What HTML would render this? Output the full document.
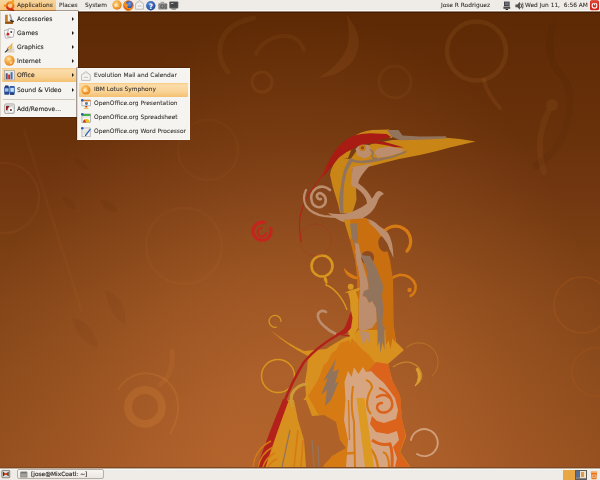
<!DOCTYPE html>
<html><head><meta charset="utf-8"><title>Desktop</title>
<style>
html,body{margin:0;padding:0;}
body{width:600px;height:480px;overflow:hidden;position:relative;background:#7c3e15;font-family:"DejaVu Sans","Liberation Sans",sans-serif;font-size:5.86px;color:#2a2622;}
#wall{position:absolute;left:0;top:0;width:600px;height:480px;
background:
 radial-gradient(ellipse 330px 470px at 297px 485px,rgba(255,150,80,.31) 0,rgba(255,150,80,.29) 25%,rgba(255,150,80,.20) 50%,rgba(255,150,80,.10) 72%,rgba(255,150,80,0) 100%),
 linear-gradient(180deg,#5b2904 0,#5e2a05 25px,#6a320b 143px,#703610 183px,#7a3e13 243px,#844518 303px,#8b4a1b 373px,#934e1e 458px,#944f1e 480px);}
#art{position:absolute;left:0;top:0;width:600px;height:480px;}
#top{position:absolute;left:0;top:0;width:600px;height:13px;background:linear-gradient(#efebe7 0,#efebe7 9.6px,#fcfbfa 10px,#fcfbfa 10.8px,#9b8270 11px,#9b8270 12px,#431c02 12px,#431c02 13px);}
#top .t{-webkit-text-stroke:.08px #2a2622;color:#35312d;will-change:transform;position:absolute;top:0;height:11px;line-height:10.5px;white-space:nowrap;}
#appsel{position:absolute;left:0;top:0;width:56px;height:11px;background:linear-gradient(#f8d59c,#f3c27a);}
#bot{position:absolute;left:0;top:467px;width:600px;height:13px;background:linear-gradient(#7c4a24 0,#7c4a24 1px,#c4ad98 1px,#c4ad98 2px,#f6faf6 2px,#f6faf6 3px,#e9ecea 3px,#e9ecea 4px,#efebe7 4px);}
.menu{position:absolute;background:#f6f4f1;border:1px solid #f9f8f6;border-left-color:#ddd7cd;outline:0;box-shadow:0 0 0 .5px rgba(60,28,6,.85);box-sizing:border-box;}
.mi{position:absolute;left:1px;right:1px;height:14px;line-height:13.5px;white-space:nowrap;}
.mi span{position:absolute;left:15px;top:0;will-change:transform;-webkit-text-stroke:.1px #2a2622;}
#m1 .mi{font-size:6.05px}
#m2 .mi{font-size:5.92px}
#m2 .ic{width:9.8px;height:9.8px}
#m2 .mi span{-webkit-text-stroke:.06px #2a2622;color:#33302c}
.mi.sel{background:linear-gradient(#f5ca7e 0,#fbdcaa 14%,#f9d397 60%,#f3c071 100%);border-radius:1px;}
.arr{position:absolute;right:1.6px;top:5px;width:0;height:0;border-left:2.6px solid #1c1c1c;border-top:2.1px solid transparent;border-bottom:2.1px solid transparent;}
.ic{position:absolute;left:2px;top:2px;width:11px;height:11px;}
</style></head><body>
<div id="wall"></div>
<svg id="art" viewBox="0 0 600 480">
<g id="bgswirls" fill="none" style="filter:blur(.7px)">
<circle cx="476.5" cy="51" r="29.5" stroke="rgba(255,170,90,.085)" stroke-width="4.5"/>
<path d="M484,80 q3,14 16,28" stroke="rgba(255,170,90,.08)" stroke-width="4" stroke-linecap="round"/>
<path d="M552,26 q-8,30 10,50 q14,18 4,50 q-6,24 -30,40" stroke="rgba(40,10,0,.06)" stroke-width="7" stroke-linecap="round"/>
<circle cx="552" cy="105" r="6" fill="rgba(255,170,90,.07)"/>
<path d="M548,112 q-14,30 -4,60" stroke="rgba(255,170,90,.06)" stroke-width="6" stroke-linecap="round"/>
<path d="M346,14 Q368,40 352,62 Q340,76 318,78 Q342,64 348,44 Q350,28 346,14 Z" fill="rgba(255,170,90,.08)"/>
<path d="M254,18 Q224,24 220,46 Q218,60 228,72" stroke="rgba(255,170,90,.06)" stroke-width="5" stroke-linecap="round"/>
<path d="M256,54 Q262,40 280,36 Q298,34 304,50" stroke="rgba(255,170,90,.06)" stroke-width="4" stroke-linecap="round"/>
<circle cx="262" cy="82" r="10" stroke="rgba(255,170,90,.07)" stroke-width="3"/>
<circle cx="395" cy="82" r="16" stroke="rgba(255,170,90,.05)" stroke-width="3"/>
<circle cx="145" cy="407" r="17" stroke="rgba(255,170,70,.15)" stroke-width="8"/>
<path d="M118,390 a32,32 0 0,1 58,4 q6,20 -6,40" stroke="rgba(255,170,70,.12)" stroke-width="2"/>
<path d="M160,385 q14,-12 12,-34" stroke="rgba(255,170,70,.08)" stroke-width="5" stroke-linecap="round"/>
<circle cx="4" cy="198" r="35" stroke="rgba(255,160,80,.05)" stroke-width="2.5"/>
<circle cx="208" cy="150" r="30" stroke="rgba(255,160,80,.04)" stroke-width="2.5"/>
<circle cx="184" cy="246" r="38" stroke="rgba(255,160,80,.035)" stroke-width="3"/>
<path d="M24,130 L82,312" stroke="rgba(255,160,80,.04)" stroke-width="3"/>
<path d="M62,196 q12,2 14,14 q-12,-2 -14,-14 Z M100,200 q14,0 18,12 q-14,0 -18,-12 Z M74,158 q12,2 14,12 q-12,-2 -14,-12 Z" fill="rgba(50,15,0,.06)"/>
<path d="M105,290 q22,8 20,34 q-16,-8 -20,-34 Z" fill="rgba(50,15,0,.05)"/>
<path d="M72,318 q22,4 26,30 q-20,-6 -26,-30 Z" fill="rgba(50,15,0,.05)"/>
<circle cx="582" cy="305" r="28" stroke="rgba(220,110,30,.16)" stroke-width="1.6"/>
<circle cx="596" cy="372" r="24" stroke="rgba(220,110,30,.13)" stroke-width="1.6"/>
</g>
<g id="heron">
<!-- rings / swirls behind -->
<circle cx="322" cy="266" r="10.5" fill="none" stroke="#d8951f" stroke-width="2.6"/>
<path d="M325,277 q3,4 1,8 q6,2 12,9 q6,7 9,16" fill="none" stroke="#d8951f" stroke-width="1.4"/>
<path d="M324,276 q4,2 3,8 q-4,-2 -3,-8 Z" fill="#d8951f"/>
<path d="M382,235 A15,15 0 1,1 407,251" fill="none" stroke="#d67a14" stroke-width="3.3" stroke-linecap="round"/>
<path d="M384,290 Q388,277 400,274.8 Q412,275 415.5,285 Q416.5,293 410.5,296" fill="none" stroke="#d67a14" stroke-width="2.6" stroke-linecap="round"/>
<circle cx="409.5" cy="290" r="2.2" fill="#d67a14"/>
<path d="M344,268 q8,10 24,10 q-12,4 -20,-2 q-4,-4 -4,-8 Z" fill="#d67a14"/>
<circle cx="278" cy="376" r="16.5" fill="none" stroke="#d8951f" stroke-width="1.5"/>
<path d="M281,322 a6,6 0 1,0 -4,5" fill="none" stroke="#d8951f" stroke-width="1.2"/>
<path d="M411,440 a13.5,13.5 0 1,1 6,14" fill="none" stroke="#d0a07c" stroke-width="1.9" stroke-linecap="round"/>
<path d="M393,367 Q408,357 419,368 Q426,378 415,386" fill="none" stroke="rgba(220,160,50,.6)" stroke-width="1.2"/><path d="M418,368 Q425,378 415,386 Q421,377 416,369 Z" fill="#dca030" stroke="#dca030" stroke-width=".8"/>
<path d="M406,348 a18,18 0 1,1 26,28" fill="none" stroke="rgba(215,150,50,.35)" stroke-width="1.1"/>
<!-- head crown -->
<path fill="#c98516" d="M336,158 Q341,146 350,139 Q360,131 372,130 L389,129.5 L394,133 L392,138 L380,136 Q360,138 352,148 L348,158 Z"/>
<!-- beak + cheek -->
<path fill="#c98516" d="M350,160 L357,150 L372,144 L392,140 L405,139.5 L420,138.5 L444,137.6 L460,139 L475.5,141.5 L450,147.5 L435,151.5 L420,155 L399,159 L385,162.5 L372,166 L360,168 L352,168 Z"/>
<!-- neck upper -->
<path fill="#c98516" d="M337,157 L331,170 L330,175 L332.5,186 L335.5,196 L338,204 L340,213 L352,213 L354,208 L356.5,200 L356,187 L352,180 L352,170 L356,160 Z"/>
<path fill="#92735c" d="M350,158 Q344.5,166 342.5,176 Q340,190 339,200 L340.5,213 L343.5,213 Q342.5,196 344.5,182 Q346.5,168 354,160 Z"/>
<!-- tan throat -->
<path fill="#bc8e6e" d="M352.5,167 L372,163.5 Q363,172 359,180 L357,188 L351,184 Z"/>
<path d="M354,184 Q363,190 369,198 Q374,207 364,214" fill="none" stroke="#bc8e6e" stroke-width="3"/>
<!-- tan eye patch -->
<path fill="#bc8e6e" d="M355.5,149 L357.5,155.8 L365,158.5 L370,156 L371.7,150 L368.5,145 L360,144 Z"/>
<path fill="#bc8e6e" d="M377,148.5 L390,146.5 L403.5,149.2 L401.7,152.6 L390,156 L378.3,157.7 L374,153 Z"/>
<path d="M370,149.5 q5,3 2,6 q-1,3 5,3" fill="none" stroke="#92735c" stroke-width="1.6"/>
<path fill="#92735c" d="M352,159 Q360,162 370,159.5 Q380,158 392,156 L407,150.5 L406,152.8 L392,158 Q380,161 370,162.5 Q358,164.5 351,161.5 Z"/>
<path fill="#92735c" d="M387,130 L398.5,130 L402.5,135.5 L420,136.6 L446,136.2 L446,138.4 L420,139.8 L400,140.3 L391.5,136.5 Z"/>
<!-- red crest -->
<path fill="#a81c14" d="M321.5,177 Q330,156 338.3,146.7 Q345,139.5 353.3,135.8 Q361,133.5 370,133.3 L386.7,134 L391,137 L385,139 L375,140.5 L383,141.5 Q392,144 404,147.5 Q394,147.5 385,145 L372,143 Q364,144 358.3,146 L352,149.5 L346.7,152 L339,157.5 Q333,165 325.5,174 L321.5,177 Z"/>
<path d="M328,167 Q318,181 309,194 Q303,204 300.5,214 Q298,228 301.5,242" fill="none" stroke="#b0241a" stroke-width="1.2"/>
<circle cx="315.5" cy="240" r="16" fill="none" stroke="rgba(176,36,26,.25)" stroke-width="1"/>
<!-- red spiral -->
<path d="M264,222.5 a9,9 0 1,0 6.5,6 " fill="none" stroke="#c3261c" stroke-width="3.4" stroke-linecap="round"/>
<path d="M266,233 a4.2,4.2 0 1,1 -4,-5" fill="none" stroke="#c3261c" stroke-width="2" stroke-linecap="round"/>
<!-- eye -->
<circle cx="362.5" cy="147.8" r="3.3" fill="#c47818"/>
<circle cx="362.5" cy="147.8" r="1.5" fill="#8a4a10"/>
<!-- tan spiral left -->
<path d="M321,199 a3,3 0 1,1 1,-5 a7,7 0 1,1 -10,8 a11,11 0 0,1 18,-12" fill="none" stroke="#bc8e6e" stroke-width="2.6" stroke-linecap="round"/>
<path d="M306,190 q-4,8 0,16 q6,8 18,10 q8,1 16,1" fill="none" stroke="#bc8e6e" stroke-width="2.2" stroke-linecap="round"/>
<!-- tan swoosh across neck -->
<path fill="#bc8e6e" d="M328,213 Q345,216 356,210 Q368,205 374,196 Q378,187 384,194 Q379,196 377,203 Q373,213 363,218 Q373,219 379,226 Q386,236 392,252 Q383,241 375,231 Q367,223 352,223.5 Q340,223 328,213 Z"/>
<path fill="#bc8e6e" d="M352,181 L358,183 Q368,190 372,199 Q376,208 366,214 L362,213 Q369,206 366,199 Q362,190 352,186 Z"/>
<!-- neck lower -->
<path fill="#c96f10" d="M344,220 L366,218 L374,226 L384,240 L390,260 L393,280 L394,336 L358,336 L357,276 L355,260 L350,240 Z"/>
<path fill="#c98516" d="M344,220 L350,220 L352,236 L350,240 Z"/>
<ellipse cx="384" cy="243.8" rx="5.6" ry="8" fill="#8d4a1c" transform="rotate(-12 384 243.8)"/>
<circle cx="367.5" cy="257.5" r="6.6" fill="#8f4b1d"/>
<path fill="#92735c" d="M350,224 L356.7,223 L358,238 L356.5,241 L358,250 L361,253 L363.5,255.5 L370,256 L375.8,266.7 L379,275 L382.5,283.3 L383,289 L382,295 L383.3,308 L382.5,321 L383,338 L377,338 L376.7,321 L376,308 L372,301 L369,303 L366,297 L362.5,296 L364,291 L368.5,289 L368.3,283.3 L368,275 L365.8,266.7 L362.5,259 L359.5,256 L355.5,250 L353.5,241 L352,238.7 Z"/>
<path fill="#bc8e6e" d="M354.7,242.7 L358.7,244 L361.3,256 L360,266.7 L356.7,265.3 L356,252 Z"/>
<path fill="#bc8e6e" d="M355,250 L359,250 L362,262 L366,275 L368,283 L368.5,289 L364,291 L362.5,296 L366,297 L369,303 L372,301 L376,308 L376.7,321 L372,328 L366,330 L362,336 L358.7,328 L358.7,305 L360,290 L360,281 L358,268 Z"/>
<path fill="#bc8e6e" d="M368,222 Q381,225 388,233 Q393,241 393.5,258 Q390,250 387,243 Q379,231 368,222 Z"/>
<!-- yellow figure -->
<circle cx="350.7" cy="286.7" r="3" fill="#d8951f"/>
<path fill="#d8951f" d="M344.7,292.5 L350,290.5 L360,287.5 L359.5,290 L353,293.5 Z"/>
<path fill="#d8951f" d="M348,292 L356,291 L358.5,300 L358,328 L354,336 L349,336 L351,318 L350,300 Z"/>
<!-- tan J left -->
<path d="M326,312 q-5,-3 -8,2 q-1,6 6,12 q5,5 12,8" fill="none" stroke="#bc8e6e" stroke-width="2.6" stroke-linecap="round"/>
<!-- body -->
<path fill="#d8901e" d="M270,330 Q290,345 304,351 L326,349 L334,344 L344,338 L354,335 L358,330 L394,330 L396,342 L404,350 L388,364 L392,380 L400,396 L402,420 L406,436 L400,452 L410,467 L262,467 L268,446 L276,424 L288,400 L294,400 L298,408 L306,396 L305,382 L307,370 L308,356 Q288,346 270,330 Z"/>
<path fill="#d67a14" d="M318,380 L324,365 L328,361 L331,354 L336,350 L340,343 L347,341 L353,338.5 L358,345 L364,351 L369,355 L375,363 L388,364 L392,380 L400,396 L402,420 L406,436 L400,452 L410,467 L322,467 L332,456 L346,448 L340,440 L334,424 L318,414 L308,396 Z"/>
<path fill="#db631c" d="M382,364 L388,364 L392,380 L400,396 L402,420 L405,436 L399,452 L409,467 L372,467 L376,440 L380,420 L376,396 L374,380 Z"/>
<path fill="#ae622a" d="M294,400 L306,400 L312,416 L324,415 L336,422 L340,440 L346,448 L332,456 L324,467 L306,467 L304,440 L298,420 Z"/>
<path d="M308,384 q-11,0 -16,10 q-2,7 1,13" fill="none" stroke="#cf9a35" stroke-width="3.2"/>
<path d="M298,430 l-4,37 M303,440 l-2,27" stroke="#d67a14" stroke-width="1.6" fill="none"/>
<path d="M290,430 l-8,37" stroke="#92735c" stroke-width="1.2" fill="none"/>
<!-- neck strokes into body -->
<path fill="#92735c" d="M377.5,326 L384.5,326 L384.5,350 L382.5,342 L380.5,353 L379.5,341 L377.5,347 Z"/>
<path fill="#c96f10" d="M385,326 L394,326 L395.5,343 L392.5,338 L390.5,349 L388.5,340 L386,345 Z"/>
<path fill="#bc8e6e" d="M360,330 L370,333 L369,343 L366,338 L363.5,346 L361,338 Z"/>
<path fill="#d8951f" d="M348,330 L355,330 L355,342 L352,337 L350,344 Z"/>
<!-- grey strokes body -->
<path fill="#92735c" d="M336,358 L333,372 L339,369 L335,384 L339,381 L331,400 L325,406 L327,390 L321,395 L328,378 L323,381 L332,366 Z"/>
<path d="M312,440 l2,27 M318,446 l1,21" stroke="#92735c" stroke-width="1.4" fill="none"/>
<!-- tan swirl body -->
<path fill="#db631c" d="M364,376 L376,362 L388,364 L392,380 L400,396 L402,420 L405,436 L399,452 L409,467 L360,467 L360,420 Z"/>
<path fill="#d8a581" d="M344.5,382 L348,371 L351.5,377 L354,367.5 L358.5,374 L363,367 L366,372 L371,371 L377,377 L384,383 L390,391 L395,398 L398,410 L396,419 L390,421 L384,423 L377,421 L372,416 L370,424 L376,432 L388,434 L397,431 L399,440 L393,447 L397,458 L395,467 L346,467 L348,440 L344,420 L345.5,400 Z"/>
<path d="M366,380 q6,2 6,8 q-4,6 -5,14 q0,8 4,12" fill="none" stroke="#d67a14" stroke-width="2.2"/>
<path d="M377,397 q8,-5 14,2 q4,9 -4,13 q-8,2 -10,-4 q0,-5 5,-5" fill="none" stroke="#db631c" stroke-width="2.4" stroke-linecap="round"/>
<path d="M379,388 q8,3 12,10" fill="none" stroke="#db631c" stroke-width="2"/>
<path d="M372,440 q8,6 18,4 q3,8 2,23" fill="none" stroke="#db631c" stroke-width="3"/>
<path d="M366,430 q-2,10 4,18 q6,6 8,19" fill="none" stroke="#d67a14" stroke-width="2.4"/>
<path d="M353,386 q-3,20 1,36 l1,45" fill="none" stroke="#d67a14" stroke-width="2"/>
<path d="M348.5,400 l1,40" fill="none" stroke="#d67a14" stroke-width="1.4"/>
<path d="M383,452 q6,2 6,15" fill="none" stroke="#d67a14" stroke-width="2"/>
<!-- yellow strip -->
<path fill="#dc9a22" d="M356.5,398 L364.5,398 L374,467 L365,467 Z"/>
<!-- bottom orange arcs -->
<path d="M324,467 q10,-14 30,-14" fill="none" stroke="#d67a14" stroke-width="2.5"/>
<!-- red line -->
<path d="M346,329 L336,336 Q318,346 304,362 Q292,382 285,400" fill="none" stroke="#b3221a" stroke-width="2.5"/>
<path d="M351,311 L352.5,318 L351,328 L346,333.5 L340,335 L345.5,326 L348.5,318 Z" fill="#b3221a"/>
<path d="M283,399 Q270,430 257,467 L265.5,467 Q277,432 288.5,401 Z" fill="#b3221a"/>
<path d="M336,334 l14,2" fill="none" stroke="#b3221a" stroke-width="1.2"/>
<path d="M253,467 q2,-18 18,-26 M258,467 q3,-14 15,-20 M263,467 q3,-10 12,-14 M268,467 q3,-6 9,-8" fill="none" stroke="#d67a14" stroke-width="1.5"/>
</g>
</svg>

<div id="top">
 <div id="appsel"></div>
<svg style="position:absolute;left:4px;top:-0.5px;width:11px;height:11.66px;overflow:visible" viewBox="0 0 10 10.6"><circle cx="5.6" cy="5.3" r="3" fill="none" stroke="#e8701a" stroke-width="1.9"/><path d="M2.7,6.2 a3,3 0 0,0 5,1.6" fill="none" stroke="#d62a14" stroke-width="1.9"/><path d="M4.2,2.6 a3,3 0 0,1 4.3,2" fill="none" stroke="#f09a20" stroke-width="1.9"/><circle cx="0.9" cy="5.3" r="1.1" fill="#f08a1c"/><circle cx="8.1" cy="1.2" r="1.1" fill="#f0a020"/><circle cx="8.1" cy="9.4" r="1.1" fill="#d62a14"/></svg><svg style="position:absolute;left:111.8px;top:0.3px;width:10px;height:10px;overflow:visible" viewBox="0 0 10 10"><defs><radialGradient id="os1" cx=".4" cy=".35" r=".75"><stop offset="0" stop-color="#fdd27a"/><stop offset=".55" stop-color="#f4a030"/><stop offset="1" stop-color="#d9771a"/></radialGradient></defs><circle cx="5" cy="5" r="4.7" fill="url(#os1)"/><path d="M2.2,4.6 q2.2,-1.6 4.6,-.4 q-2,.2 -2.6,1.4 q2.2,-.6 3.6,.8 q-2.6,-.4 -4.2,.8 q-1.6,-.8 -1.4,-2.6 Z" fill="#fff4dc" opacity=".85"/></svg><svg style="position:absolute;left:123.2px;top:0px;width:11px;height:11px;overflow:visible" viewBox="0 0 11 11"><defs><radialGradient id="ffg" cx=".55" cy=".4" r=".7"><stop offset="0" stop-color="#6aa0e8"/><stop offset="1" stop-color="#1c3c98"/></radialGradient></defs><circle cx="5.4" cy="5.4" r="5.2" fill="#e0661a"/><circle cx="6" cy="4.6" r="3.6" fill="url(#ffg)"/><path d="M0.4,4.6 q.6,-3.2 3.6,-4.2 q-1.6,1.8 -.6,3.4 q1.4,.2 2.2,1.4 q-1.6,.6 -1.2,2 q1,1.6 3.2,1 q1.6,-.6 2.2,-2.4 q.6,3.4 -2.6,4.8 q-3.6,1 -5.8,-1.6 q-1.4,-2 -1,-4.4 Z" fill="#f09020"/><path d="M0.6,5 q.4,3.4 3.4,4.8 q2,.6 3.6,0 q-3.4,.2 -5,-2 q-1,-1.4 -2,-2.8 Z" fill="#d83a14"/></svg><svg style="position:absolute;left:135.2px;top:0.3px;width:9px;height:10px;overflow:visible" viewBox="0 0 9 10"><path d="M0.6,3.6 L4.5,0.6 L8.4,3.6 L8.4,9.2 L0.6,9.2 Z" fill="#f4f3f1" stroke="#a8a49e" stroke-width=".7"/><path d="M2.6,6 h3.8" stroke="#b4b0aa" stroke-width=".8"/><path d="M0.8,3.8 L4.5,2 L8.2,3.8" fill="none" stroke="#c8c4be" stroke-width=".5"/></svg><svg style="position:absolute;left:146px;top:0.5px;width:9.6px;height:9.6px;overflow:visible" viewBox="0 0 9.6 9.6"><defs><radialGradient id="hg" cx=".4" cy=".3" r=".8"><stop offset="0" stop-color="#5a8ad8"/><stop offset="1" stop-color="#173c90"/></radialGradient></defs><circle cx="4.8" cy="4.8" r="4.7" fill="url(#hg)"/><text x="4.8" y="7.6" font-size="7.4" font-weight="bold" text-anchor="middle" fill="#fff" font-family="DejaVu Sans,Liberation Sans,sans-serif">?</text></svg><svg style="position:absolute;left:157.6px;top:0.8px;width:9.6px;height:9.2px;overflow:visible" viewBox="0 0 9.6 9.2"><rect x="0.3" y="2.2" width="9" height="6.4" rx=".8" fill="#8c8c8a"/><rect x="2.6" y="0.8" width="3.6" height="2" fill="#a4a4a2"/><circle cx="4.4" cy="5.4" r="2.2" fill="#5a5a58"/><circle cx="4.4" cy="5.4" r="1.1" fill="#9a9a98"/><rect x="7" y="3" width="1.8" height="5" fill="#6e6e6c"/></svg><svg style="position:absolute;left:168.8px;top:0.8px;width:9.6px;height:9.2px;overflow:visible" viewBox="0 0 9.6 9.2"><rect x="0.3" y="0.4" width="9" height="7" rx=".8" fill="#5c5c5a"/><rect x="1.2" y="1.2" width="7.2" height="5.2" fill="#44464a"/><rect x="2" y="2" width="2.4" height=".8" fill="#c8c8c8"/><rect x="2.6" y="7.4" width="4.4" height="1.2" fill="#74746f"/></svg><svg style="position:absolute;left:503px;top:0.8px;width:8px;height:9.6px;overflow:visible" viewBox="0 0 8 9.6"><rect x="1" y="0.6" width="5.6" height="4.6" fill="#3c3c3c"/><rect x="1.8" y="1.3" width="4" height="3" fill="#6c7078"/><rect x="0.4" y="5.6" width="6.8" height="2.2" fill="#4a4a4a"/><rect x="2.6" y="8" width="2.4" height="1" fill="#2c2c2c"/></svg><svg style="position:absolute;left:514.6px;top:0.6px;width:9px;height:9.6px;overflow:visible" viewBox="0 0 9 9.6"><path d="M0.4,3.4 h2 l2.6,-2.6 v8 l-2.6,-2.6 h-2 Z" fill="#55534f"/><path d="M6,2.4 q1.4,2.4 0,4.8 M7.4,1.4 q2,3.4 0,6.8" fill="none" stroke="#77746f" stroke-width=".7"/><path d="M5.4,2.6 l2.6,4.4 M8,2.6 l-2.6,4.4" stroke="#44423e" stroke-width=".7"/></svg><svg style="position:absolute;left:589.8px;top:0.1px;width:9px;height:10.6px;overflow:visible" viewBox="0 0 8.6 9.6"><rect x="0" y="0" width="8.6" height="9.6" rx="1.6" fill="#d3261a"/><rect x="0.5" y="0.5" width="7.6" height="4" rx="1.2" fill="#e4513f" opacity=".6"/><circle cx="4.3" cy="5.2" r="2.3" fill="none" stroke="#fff" stroke-width="1"/><rect x="3.7" y="1.8" width="1.2" height="3.2" fill="#fff" stroke="#d3261a" stroke-width=".4"/></svg>
 <div class="t" style="left:17px">Applications</div>
 <div class="t" style="left:59px">Places</div>
 <div class="t" style="left:85px">System</div>
 <div class="t" style="left:441px">Jose R Rodriguez</div>
 <div class="t" style="left:524.5px">Wed Jun 11,&nbsp; 6:56 AM</div>
</div>

<div class="menu" id="m1" style="left:0;top:11px;width:77.5px;height:106px;">
 <div class="mi" style="top:0.2px"><svg class="ic" style="left:2.2px;top:1.8px" viewBox="0 0 10 10"><path d="M1,0.6 h2.4 v6 h4.8 v2.2 h-7.2 Z" fill="#c47a22"/><path d="M1,7.4 h7.2 v1.4 h-7.2 Z" fill="#8a4a12"/><path d="M4.6,0.2 l1.6,0 l1.6,5.4 l-1.2,.6 Z" fill="#9a9a9a"/><path d="M5,5 l3.8,1.2 l.4,1.4 l-3,-.6 Z" fill="#2e2e2e"/></svg><span>Accessories</span><i class="arr"></i></div>
 <div class="mi" style="top:14.2px"><svg class="ic" style="left:2.4px;top:1.5px" viewBox="0 0 10 10"><rect x="0.6" y="1.6" width="5.6" height="7.4" rx=".6" fill="#f6f6f6" stroke="#9a9a9a" stroke-width=".6" transform="rotate(-14 3.4 5.3)"/><rect x="3.4" y="0.8" width="5.6" height="7.4" rx=".6" fill="#fbfbfb" stroke="#9a9a9a" stroke-width=".6" transform="rotate(10 6.2 4.5)"/><circle cx="3.6" cy="5.6" r="1.3" fill="#d02020"/><circle cx="6.6" cy="3.6" r=".9" fill="#404040"/></svg><span>Games</span><i class="arr"></i></div>
 <div class="mi" style="top:28.2px"><svg class="ic" style="left:2.4px;top:1.5px" viewBox="0 0 10 10"><path d="M7.6,0.4 L9.4,9.4 L3,9.4 Z" fill="#f2b53c"/><path d="M7.6,0.4 L9.4,9.4 L7,9.4 Z" fill="#e8e4da"/><path d="M4.4,6.4 L9.4,6.4 L9.4,9.4 L3,9.4 Z" fill="#d8d4cc" opacity=".85"/><path d="M7.8,1 L3.4,6.6 L2.4,6 Z" fill="#c89448"/><path d="M3.6,6 L0.4,9.4 L1.8,9.6 L4.2,6.8 Z" fill="#3a3a3a"/></svg><span>Graphics</span><i class="arr"></i></div>
 <div class="mi" style="top:42.2px"><svg class="ic" style="left:2.2px;top:1.2px" viewBox="0 0 10 10"><defs><radialGradient id="gl" cx=".4" cy=".35" r=".75"><stop offset="0" stop-color="#fdd890"/><stop offset=".5" stop-color="#f5a63a"/><stop offset="1" stop-color="#dd7a1a"/></radialGradient></defs><circle cx="5" cy="5" r="4.7" fill="url(#gl)"/><path d="M3,2.4 q2,-.6 3.4,.6 q-.4,1.6 -2,1.8 q-1.6,-.4 -1.4,-2.4 Z M5.4,5.6 q1.6,-.2 2.4,1 q-.6,1.6 -2,1.8 q-1,-1.2 -.4,-2.8 Z" fill="#fbe4b4" opacity=".7"/></svg><span>Internet</span><i class="arr"></i></div>
 <div class="mi sel" style="top:56.3px"><svg class="ic" style="left:2.4px;top:1.5px" viewBox="0 0 10 10"><rect x="0.4" y="0.6" width="9" height="8.4" fill="#ece8e2" stroke="#a8a096" stroke-width=".6"/><rect x="1.6" y="3" width="1.8" height="5.4" fill="#4a5a78"/><rect x="3.8" y="4.2" width="1.8" height="4.2" fill="#d82a20"/><rect x="6" y="2" width="1.8" height="6.4" fill="#3a70c0"/></svg><span>Office</span><i class="arr"></i></div>
 <div class="mi" style="top:70.9px"><svg class="ic" style="left:2.2px;top:1.7px" viewBox="0 0 10 10"><rect x="0.2" y="1.4" width="4.6" height="7.4" rx=".8" fill="#2a4a90"/><rect x="5" y="1" width="4.8" height="6.8" rx=".8" fill="#2c58a8"/><rect x="0.9" y="3" width="3.2" height="3" fill="#9cc0ec"/><rect x="5.8" y="2.6" width="3.2" height="3.6" fill="#c4dcf4"/><rect x="1" y="0.4" width="3" height="1.4" fill="#1e3870"/><rect x="5.4" y="7.4" width="4" height="1.6" fill="#1e3870"/></svg><span>Sound &amp; Video</span><i class="arr"></i></div>
 <div style="position:absolute;left:2px;right:2px;top:87px;height:1px;background:#cfc9c0"></div>
 <div class="mi" style="top:89.9px"><svg class="ic" style="left:2.4px;top:1.2px" viewBox="0 0 10 10"><rect x="0.5" y="0.8" width="9" height="8.8" rx="1.4" fill="#e9e9e6" stroke="#9a9a96" stroke-width=".7"/><rect x="1.8" y="2.4" width="3" height="4.2" fill="#8e1c20"/><rect x="1.4" y="1.6" width="7.2" height="1" fill="#c8c8c4"/><circle cx="6.3" cy="6.3" r="2.9" fill="#fbfbfb" stroke="#b4b4b0" stroke-width=".5"/><circle cx="6.3" cy="6.3" r=".9" fill="#5a2020"/></svg><span>Add/Remove...</span></div>
</div>

<div class="menu" id="m2" style="left:77px;top:67.5px;width:112.5px;height:72px;">
 <div class="mi" style="top:0.4px"><svg class="ic" style="left:2.2px;top:2.2px" viewBox="0 0 10 10"><path d="M0.6,3.8 L5,0.6 L9.4,3.8 L9.4,9.6 L0.6,9.6 Z" fill="#f6f5f3" stroke="#aaa6a0" stroke-width=".7"/><path d="M3,6.4 h4" stroke="#b4b0aa" stroke-width=".8"/><path d="M0.9,4 L5,2.2 L9.1,4" fill="none" stroke="#ccc8c2" stroke-width=".5"/></svg><span style="left:15px">Evolution Mail and Calendar</span></div>
 <div class="mi sel" style="top:14.6px"><svg class="ic" style="left:2.2px;top:2px" viewBox="0 0 10 10"><defs><radialGradient id="os2" cx=".4" cy=".35" r=".75"><stop offset="0" stop-color="#fdd27a"/><stop offset=".55" stop-color="#f4a030"/><stop offset="1" stop-color="#d9771a"/></radialGradient></defs><circle cx="5" cy="5" r="4.7" fill="url(#os2)"/><path d="M2.2,4.6 q2.2,-1.6 4.6,-.4 q-2,.2 -2.6,1.4 q2.2,-.6 3.6,.8 q-2.6,-.4 -4.2,.8 q-1.6,-.8 -1.4,-2.6 Z" fill="#fff4dc" opacity=".85"/></svg><span style="left:15px">IBM Lotus Symphony</span></div>
 <div class="mi" style="top:28.4px"><svg class="ic" style="left:2px;top:2px" viewBox="0 0 10 10"><rect x="1" y="1" width="8.6" height="6" fill="#fafafa" stroke="#8a8a8a" stroke-width=".6"/><rect x="1" y="1" width="8.6" height="1.4" fill="#e08030"/><circle cx="5.6" cy="4.6" r="1.5" fill="#3a6ac0"/><path d="M5.6,4.6 l1.5,0 a1.5,1.5 0 0,0 -1.5,-1.5 Z" fill="#e8a020"/><path d="M2.6,10 q2.6,-3.2 5.4,0 Z" fill="#e8a828"/><path d="M3.6,7.2 h3.4 l-1.7,1.6 Z" fill="#c83c14"/><circle cx="1.3" cy="1.3" r="1.3" fill="#2c5cb0"/></svg><span style="left:15px">OpenOffice.org Presentation</span></div>
 <div class="mi" style="top:42.4px"><svg class="ic" style="left:2px;top:2px" viewBox="0 0 10 10"><rect x="1" y="1" width="8.6" height="8.6" fill="#fafafa" stroke="#8a8a8a" stroke-width=".6"/><rect x="1" y="1" width="8.6" height="2.2" fill="#48b048"/><path d="M2,9.6 a3.4,3.4 0 0,1 6.8,0 Z" fill="#e8c020"/><path d="M5.4,9.6 L2,9.6 a3.4,3.4 0 0,1 1.6,-2.9 Z" fill="#d83020"/><path d="M2,4.8 h6.6" stroke="#c0c0c0" stroke-width=".4"/><circle cx="1.3" cy="1.3" r="1.3" fill="#2c5cb0"/></svg><span style="left:15px">OpenOffice.org Spreadsheet</span></div>
 <div class="mi" style="top:56.4px"><svg class="ic" style="left:2px;top:2px" viewBox="0 0 10 10"><rect x="1" y="1" width="8.4" height="9" fill="#f4f2ea" stroke="#9a9a9a" stroke-width=".6"/><path d="M2.4,4 h5 M2.4,5.6 h5 M2.4,7.2 h4" stroke="#c8c4b8" stroke-width=".5"/><path d="M9.2,1.6 L10,2.6 L5.4,8.6 L4,9.2 L4.4,7.8 Z" fill="#2c62c0"/><path d="M4,9.2 l.4,-1.4 l1,.8 Z" fill="#1a2c5a"/><circle cx="1.3" cy="1.3" r="1.3" fill="#2c5cb0"/></svg><span style="left:15px">OpenOffice.org Word Processor</span></div>
</div>

<div id="bot">
 <div style="position:absolute;left:17px;top:2.2px;width:86.6px;height:9.6px;border:1px solid #b6b0a6;border-radius:2px;box-sizing:border-box;background:linear-gradient(#f7f5f2,#ebe7e2);"></div>
<svg style="position:absolute;left:0.8px;top:2.6px;width:9.6px;height:9px;overflow:visible" viewBox="0 0 9.6 10"><rect x="0.4" y="0.4" width="8.8" height="8.2" rx=".8" fill="#dcd8d2" stroke="#6a655f" stroke-width=".8"/><path d="M1.6,1.8 L4.8,4.5 L1.6,7.2 Z M8,1.8 L4.8,4.5 L8,7.2 Z" fill="#3c2e26"/><path d="M2.4,3.6 L7.2,3.6 L6.4,5.6 L3.2,5.6 Z" fill="#d8481c"/></svg><svg style="position:absolute;left:19.6px;top:3.6px;width:7.6px;height:7.6px;overflow:visible" viewBox="0 0 7.6 7.6"><rect x="0.2" y="0.4" width="7.2" height="6.2" rx=".6" fill="#8a8884"/><rect x="1" y="1.2" width="5.6" height="4.4" fill="#a4a29c"/><rect x="1" y="1.2" width="5.6" height="1.2" fill="#6e6c68"/></svg><div style="position:absolute;left:563.4px;top:3px;width:11.6px;height:10px;background:#e9a743;"></div><div style="position:absolute;left:575px;top:3px;width:11.6px;height:10px;background:#7b7f87;border:1px solid #5d5a58;box-sizing:border-box;"></div><div style="position:absolute;left:576.4px;top:4.4px;width:3.4px;height:5.6px;background:#5a6e94;"></div><div style="position:absolute;left:579.6px;top:3.8px;width:5.4px;height:7px;background:#d89a50;border:.6px solid #f0e2c8;box-sizing:border-box"></div><div style="position:absolute;left:584.6px;top:3.6px;width:1.4px;height:7.6px;background:#e8e4dc;"></div><svg style="position:absolute;left:589.8px;top:3.6px;width:8px;height:8.6px;overflow:visible" viewBox="0 0 8.4 10"><rect x="0.4" y="0.4" width="7.6" height="2" rx=".6" fill="#f4a860"/><path d="M0.8,2.4 h6.8 l-.5,7.2 h-5.8 Z" fill="#e8741c"/><rect x="2.3" y="4.2" width="3.8" height="3.8" fill="#f8d8b0" opacity=".9"/><circle cx="4.2" cy="6.1" r="1.2" fill="#e8741c"/></svg>

 <div style="position:absolute;left:31px;top:2.6px;height:10px;line-height:9.5px;white-space:nowrap;will-change:transform;-webkit-text-stroke:.15px #2a2622;">[jose@MixCoatl: ~]</div>
</div>
</body></html>
